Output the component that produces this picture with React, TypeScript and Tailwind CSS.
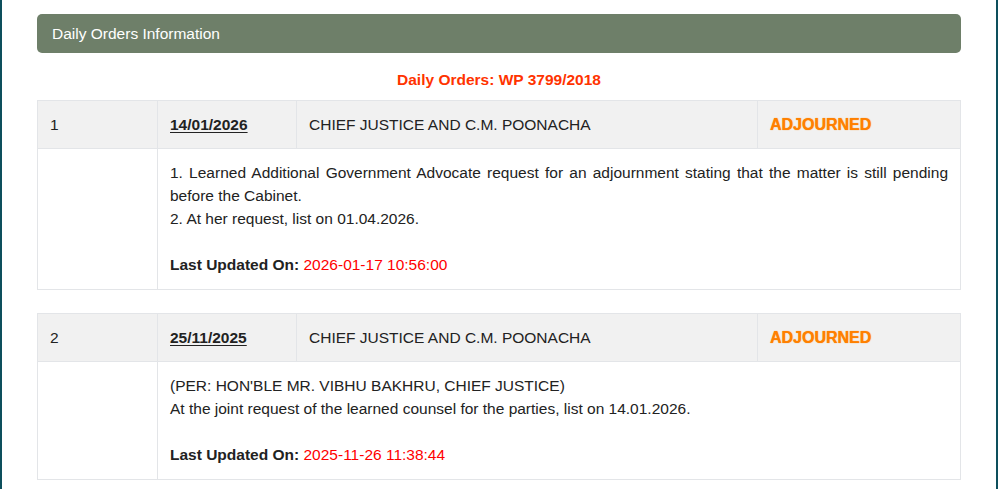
import React from 'react';

type Order = {
  sl: number;
  date: string;
  bench: string;
  status: string;
  lines: string[];
  updated: string;
};

const orders: Order[] = [
  {
    sl: 1,
    date: '14/01/2026',
    bench: 'CHIEF JUSTICE AND C.M. POONACHA',
    status: 'ADJOURNED',
    lines: [
      '1. Learned Additional Government Advocate request for an adjournment stating that the matter is still pending before the Cabinet.',
      '2. At her request, list on 01.04.2026.',
    ],
    updated: '2026-01-17 10:56:00',
  },
  {
    sl: 2,
    date: '25/11/2025',
    bench: 'CHIEF JUSTICE AND C.M. POONACHA',
    status: 'ADJOURNED',
    lines: [
      "(PER: HON'BLE MR. VIBHU BAKHRU, CHIEF JUSTICE)",
      'At the joint request of the learned counsel for the parties, list on 14.01.2026.',
    ],
    updated: '2025-11-26 11:38:44',
  },
];

function OrderTable({ order }: { order: Order }) {
  return (
    <table className="mb-[23px] w-full border-collapse border border-[#e3e5e8] text-[15.5px] leading-[23px] text-[#222]">
      <tbody>
        <tr className="bg-[#f1f1f1]">
          <td className="w-[120px] border border-[#e3e5e8] px-3 py-3">{order.sl}</td>
          <td className="w-[139px] border border-[#e3e5e8] px-3 py-3 font-bold underline underline-offset-2">
            {order.date}
          </td>
          <td className="border border-[#e3e5e8] px-3 py-3">{order.bench}</td>
          <td className="w-[203px] border border-[#e3e5e8] px-3 py-3 text-[16px] font-bold text-[#ff8000] [text-shadow:0_0_1px_#ff8000]">
            {order.status}
          </td>
        </tr>
        <tr className="bg-white">
          <td className="border border-[#e3e5e8] px-3 py-3"></td>
          <td colSpan={3} className="border border-[#e3e5e8] px-3 pt-3 pb-[13px] text-justify">
            {order.lines.map((l) => (
              <div key={l}>{l}</div>
            ))}
            <div className="h-[23px]"></div>
            <div>
              <span className="font-bold">Last Updated On: </span>
              <span className="text-[#ff0000]">{order.updated}</span>
            </div>
          </td>
        </tr>
      </tbody>
    </table>
  );
}

export default function App() {
  return (
    <div className="h-[489px] w-full overflow-hidden bg-white font-['Liberation_Sans',Arial,sans-serif]">
      <div className="h-full w-[998px] border-x-2 border-[#0d4f5c] px-[35px] pt-[14px]">
        <div className="flex h-[39px] items-center rounded-[5px] bg-[#6e7f69] px-[15px] text-[15.5px] text-white">
          Daily Orders Information
        </div>
        <div className="mt-[17px] mb-[10px] text-center text-[15.5px] leading-[20px] font-bold text-[#ff3300]">
          Daily Orders: WP 3799/2018
        </div>
        {orders.map((o) => (
          <OrderTable key={o.sl} order={o} />
        ))}
      </div>
    </div>
  );
}
